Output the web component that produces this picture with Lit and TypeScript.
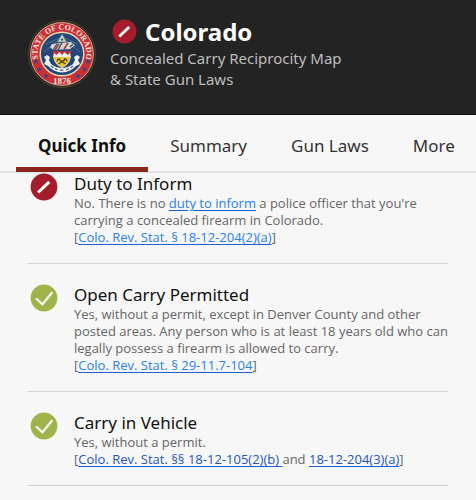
import { LitElement, html, css, svg, type TemplateResult } from "lit";
import { customElement, property, state } from "lit/decorators.js";
import { classMap } from "lit/directives/class-map.js";

@customElement("status-icon")
class StatusIcon extends LitElement {
  @property() kind: "no" | "yes" = "yes";

  static styles = css`
    :host { display: block; }
    svg { display: block; width: 100%; height: 100%; }
    .no { fill: #a51d2a; }
    .yes { fill: #a0b44c; }
    .mark { fill: none; stroke: #fff; }
    .slash { stroke-width: 2.9; }
    .check { stroke-width: 2.1; stroke-linecap: round; stroke-linejoin: round; }
  `;

  render() {
    return html`<svg viewBox="0 0 27 27" aria-hidden="true">
      <circle class=${this.kind} cx="13.5" cy="13.5" r="12.9" />
      ${this.kind === "no"
        ? svg`<path class="mark slash" d="M7.8 18.8 18.6 8.6" />`
        : svg`<path class="mark check" d="M6.5 14.4 12 19.6 21 8.6" />`}
    </svg>`;
  }
}

@customElement("state-seal")
class StateSeal extends LitElement {
  static styles = css`
    :host { display: block; }
    svg { display: block; width: 100%; height: 100%; }
    .ring { font: bold 8px "Liberation Serif", serif; fill: #f6e6dc; text-anchor: middle; }
    .year { font: bold 9px "Liberation Serif", serif; fill: #f6e6dc; text-anchor: middle; }
  `;

  render() {
    const stars = [
      [-26, 7.5], [-22.6, 15.4], [-16, 22],
      [26, 7.5], [22.6, 15.4], [16, 22],
    ];
    return html`<svg viewBox="-35 -35 70 70" role="img" aria-label="Seal of the State of Colorado">
      <defs>
        <path id="arc" d="M-22.6 9.2A24.4 24.4 0 1 1 22.6 9.2" />
      </defs>
      <circle r="33.4" fill="#29241a" stroke="#50452c" stroke-width="1" />
      <circle r="31.4" fill="#cb3038" stroke="#e6cdb4" stroke-width=".8" />
      <circle r="21.8" fill="#23477c" stroke="#e8d9a8" stroke-width="1.5" />
      <path d="M0-17-16-10M0-17-18-2M0-17 16-10M0-17 18-2M0-17-9-3M0-17 9-3" stroke="#6d8466" stroke-width=".7" />
      <path d="M0-20 4.5-12H-4.5Z" fill="#cfd6cf" stroke="#6a7d70" stroke-width=".7" />
      <circle cy="-14.4" r="1.2" fill="#39547c" />
      <path d="M-10-10 9-12 13-9 8-5-9-4-12-7Z" fill="#d4d5d1" />
      <path d="M-9-4-5-10M-4-4 0-11M8-7 11-10" stroke="#354b68" stroke-width="1.3" />
      <path d="M-7-4-3-10M2-5 6-11" stroke="#a93a40" stroke-width="1.7" />
      <path d="M-8.5-2H8.5Q9.5 10 0 13.5Q-9.5 10-8.5-2Z" fill="#edc52f" stroke="#f1e6bd" stroke-width=".8" />
      <path d="M-9-3H9V2H-9Z" fill="#b3323d" />
      <path d="M-8.8 3-8-1-5.5 1-2.5-2 0 1 2.5-2 5.5 1 8-1 8.8 3Z" fill="#efefec" />
      <path d="M-3.5 10 3.5 5.2M3.5 10-3.5 5.2" stroke="#4c4225" stroke-width="1.4" />
      <path d="M-5 7.5Q-4.6 5-2 4.6M5 7.5Q4.6 5 2 4.6" stroke="#4c4225" stroke-width="1.2" fill="none" />
      <path d="M-18 3-15 1-12 3-13 6-11 10Q-6 14 0 14Q6 14 11 10L13 6 12 3 15 1 18 3 16 6 18 10 14 12Q8 18 0 18.5Q-8 18-14 12L-18 10-16 6Z" fill="#eef0f0" />
      <path d="M-11 12-8.5 13.8M-7 14.6-4.5 15.7M-2 16.2H1.5M4 15.8 7 14.6M8.5 13.8 11 12" stroke="#4a5972" stroke-width="1.2" />
      <text class="ring"><textPath href="#arc" startOffset="50%">STATE OF COLORADO</textPath></text>
      <text class="year" y="30">1876</text>
      ${stars.map(([x, y]) => svg`<path transform="translate(${x} ${y})"
        d="M0-2.7.7-.9 2.6-.8 1.1.4 1.6 2.2 0 1.2-1.6 2.2-1.1.4-2.6-.8-.7-.9Z" fill="#254a83" />`)}
    </svg>`;
  }
}

@customElement("law-item")
class LawItem extends LitElement {
  @property() kind: "no" | "yes" = "yes";
  @property() heading = "";

  static styles = css`
    :host {
      display: flex;
      gap: 16px;
      margin: 0 28px;
      padding: 20px 0 16px 2px;
      border-bottom: 1px solid #ccd3da;
    }
    :host(:first-of-type) { padding-top: 0; }
    status-icon { width: 28px; height: 28px; flex: none; }
    .body { flex: 1; min-width: 0; }
    h2 { margin: 0; font-size: 17px; line-height: 22px; font-weight: 400; color: #111; }
    p {
      margin: 0;
      padding-bottom: 1px;
      font-family: "Open Sans", "Noto Sans", sans-serif;
      font-size: 13px;
      line-height: 17px;
      color: #666;
    }
  `;

  render() {
    return html`
      <status-icon kind=${this.kind}></status-icon>
      <div class="body">
        <h2>${this.heading}</h2>
        <p><slot></slot></p>
      </div>
    `;
  }
}

@customElement("app-root")
class AppRoot extends LitElement {
  @state() private active = "Quick Info";

  private tabs = ["Quick Info", "Summary", "Gun Laws", "More"];

  static styles = css`
    :host {
      display: block;
      min-height: 100vh;
      overflow-x: hidden;
      background: #f7f7f7;
      font-family: "Noto Sans", "Open Sans", sans-serif;
    }
    header {
      display: flex;
      gap: 13px;
      padding: 18px 27px 24px;
      background: #232323;
      border-bottom: 1px solid #0c0c0c;
    }
    state-seal { width: 70px; height: 72px; flex: none; }
    .title { display: flex; align-items: center; gap: 8px; padding: 0 0 2px 2px; }
    .title status-icon { width: 25px; height: 25px; margin-bottom: 1px; }
    .intro { min-width: 0; }
    h1 { margin: 0; font-size: 24px; line-height: 28px; font-weight: 700; color: #fff; }
    .sub { margin: 0; font-size: 15px; line-height: 21px; color: #bdbdbd; }
    nav {
      display: flex;
      height: 56px;
      padding-left: 16px;
      border-bottom: 2px solid #dee2e6;
    }
    .tab {
      flex: none;
      box-sizing: border-box;
      height: 57px;
      padding: 10px 22px 0;
      border: 0;
      border-bottom: 5px solid transparent;
      background: none;
      font: 400 17px/24px "Noto Sans", "Open Sans", sans-serif;
      color: #333;
    }
    .tab.on { font-weight: 700; color: #111; border-bottom-color: #8a261c; }
    a {
      color: #2880f0;
      text-decoration: underline;
      text-decoration-color: #2060cc;
      text-underline-offset: 2px;
    }
    a.dark { color: #2456b8; }
  `;

  private tab(name: string): TemplateResult {
    return html`<button
      class=${classMap({ tab: true, on: name === this.active })}
      @click=${() => (this.active = name)}
    >${name}</button>`;
  }

  render() {
    return html`
      <header>
        <state-seal></state-seal>
        <div class="intro">
          <div class="title"><status-icon kind="no"></status-icon><h1>Colorado</h1></div>
          <p class="sub">Concealed Carry Reciprocity Map<br />&amp; State Gun Laws</p>
        </div>
      </header>
      <nav>${this.tabs.map((t) => this.tab(t))}</nav>
      <main>
        <law-item kind="no" heading="Duty to Inform">No. There is no <a href="#duty">duty to inform</a> a police officer that you're carrying a concealed firearm in Colorado.<br />[<a href="#18-12-204-2">Colo. Rev. Stat. § 18-12-204(2)(a)</a>]</law-item>
        <law-item kind="yes" heading="Open Carry Permitted">Yes, without a permit, except in Denver County and other posted areas. Any person who is at least 18 years old who can legally possess a firearm is allowed to carry.<br />[<a href="#29-11.7-104">Colo. Rev. Stat. § 29-11.7-104</a>]</law-item>
        <law-item kind="yes" heading="Carry in Vehicle">Yes, without a permit.<br />[<a class="dark" href="#18-12-105">Colo. Rev. Stat. §§ 18-12-105(2)(b)&nbsp;</a>and <a class="dark" href="#18-12-204-3">18-12-204(3)(a)</a>]</law-item>
      </main>
    `;
  }
}
